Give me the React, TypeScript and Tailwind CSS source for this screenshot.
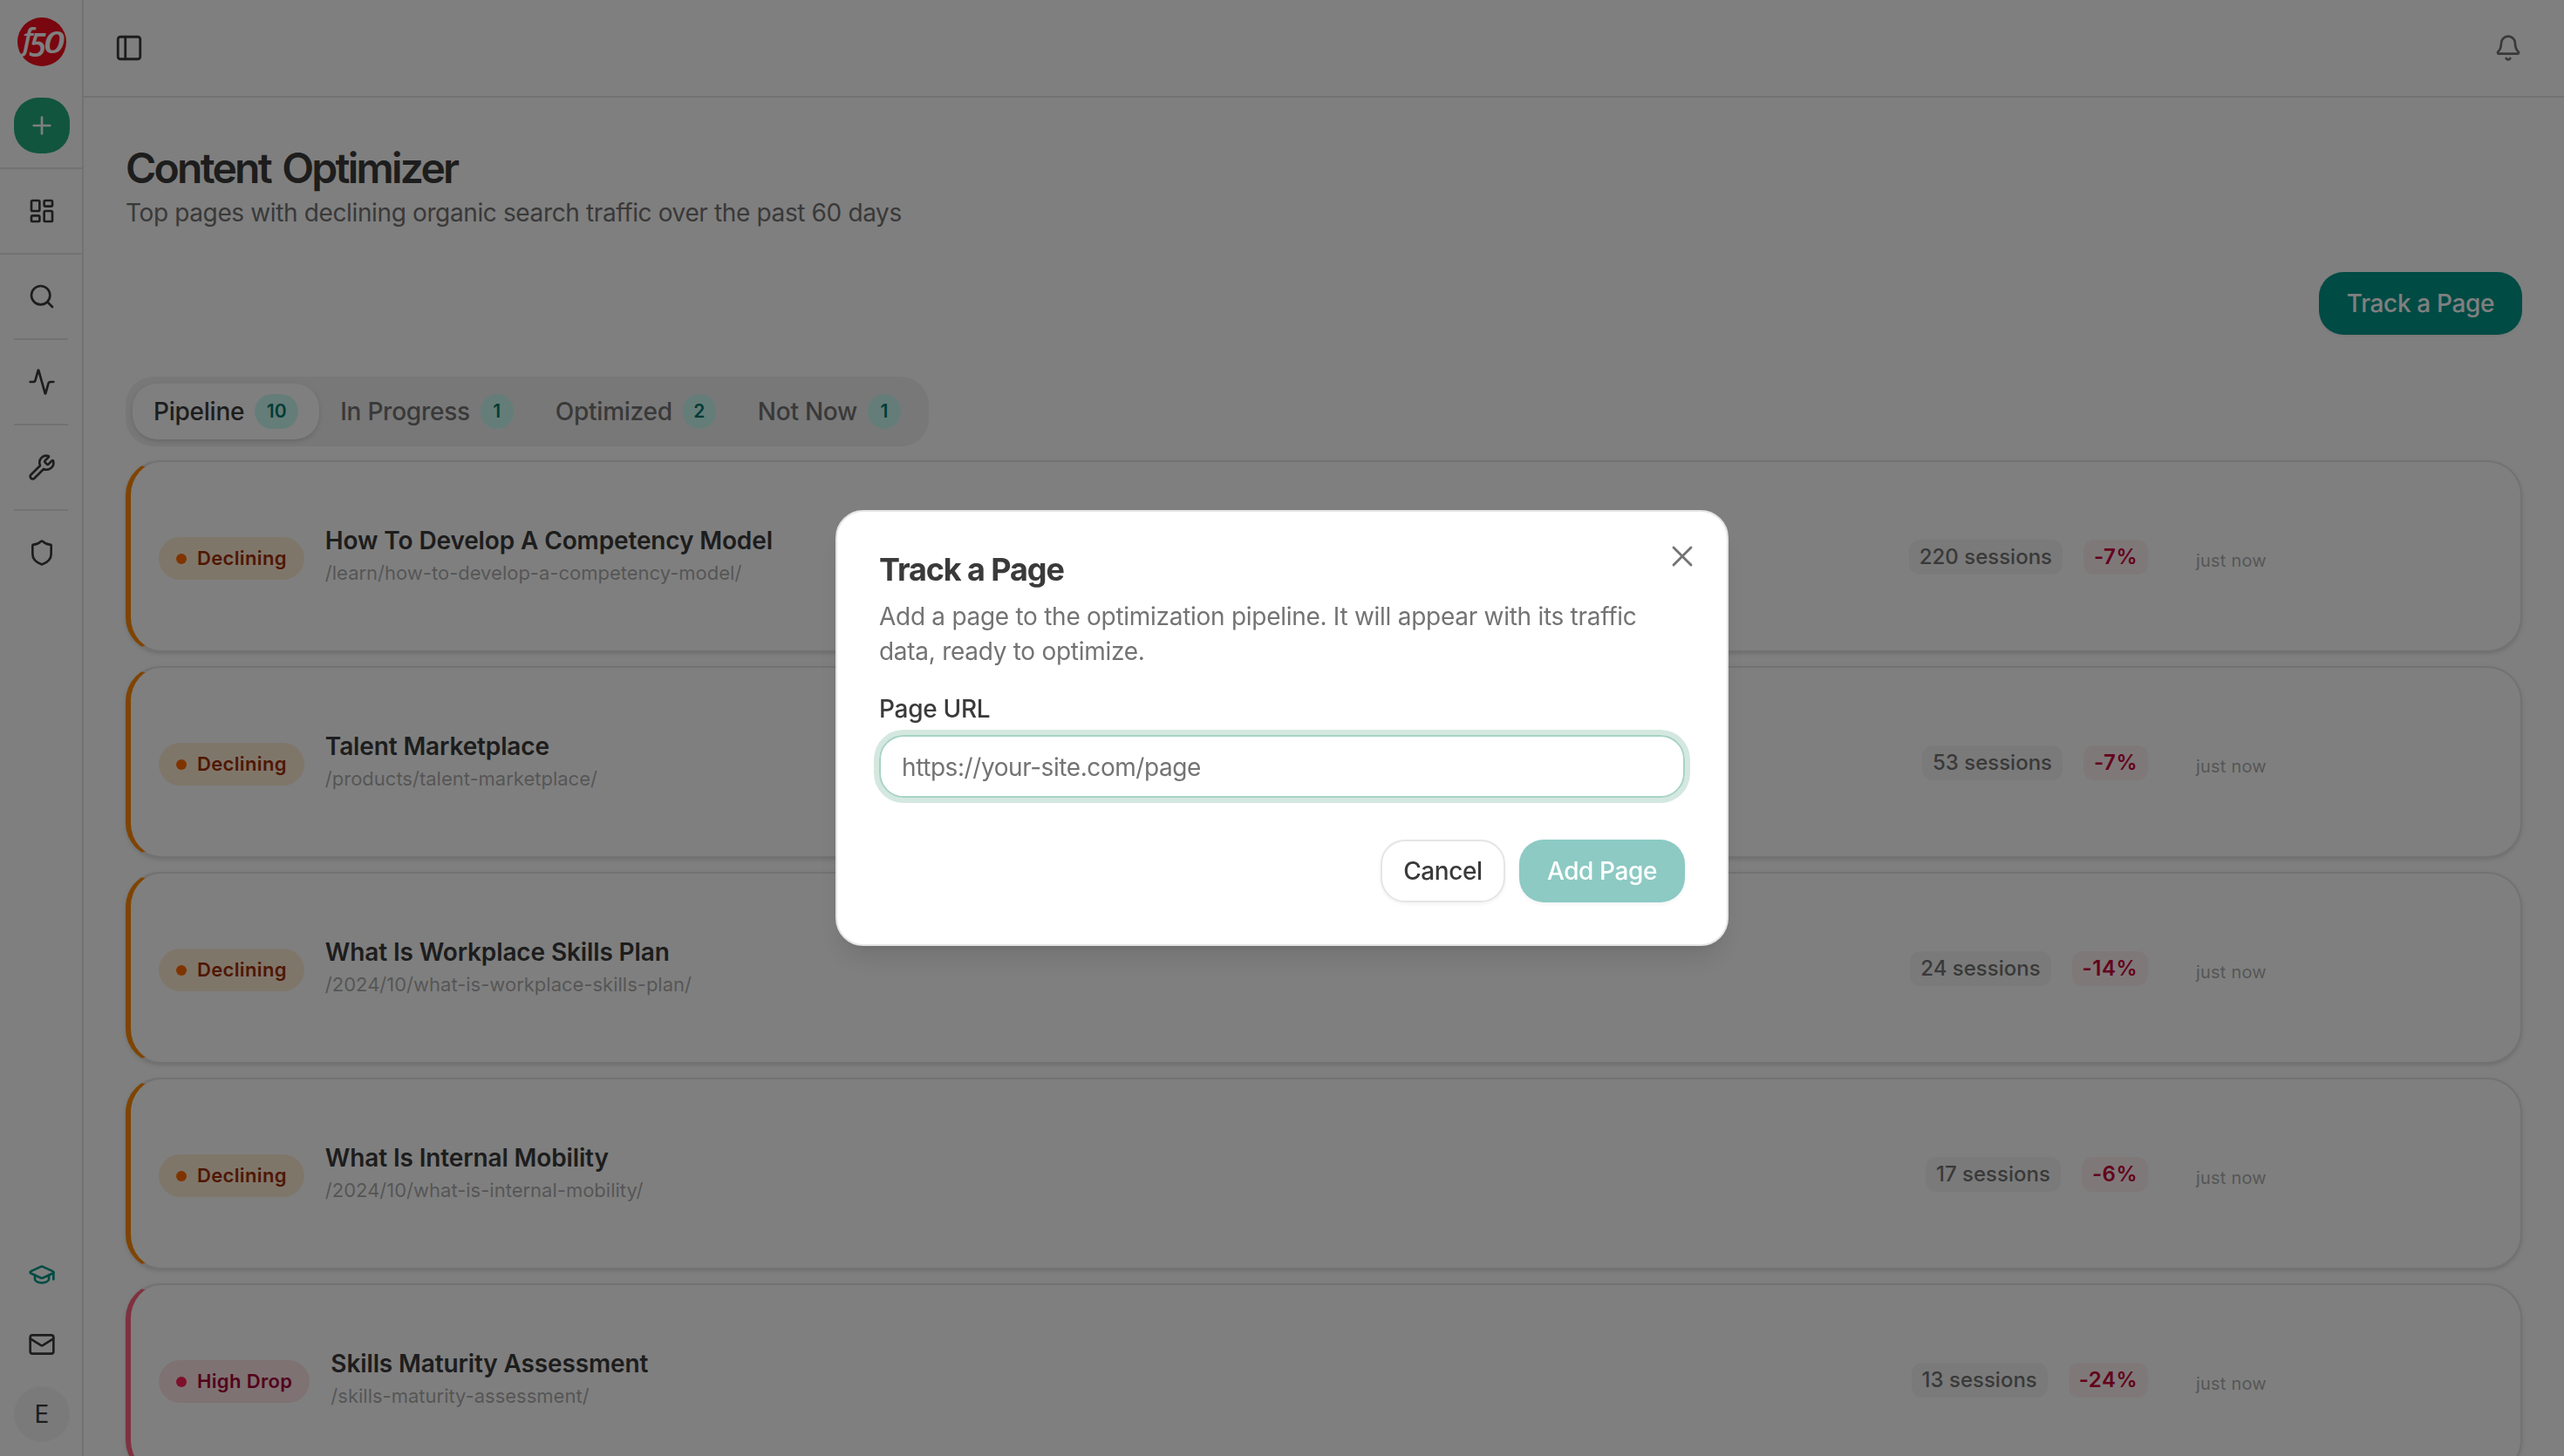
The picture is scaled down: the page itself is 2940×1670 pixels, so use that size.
import {
  Activity,
  Bell,
  GraduationCap,
  LayoutDashboard,
  Mail,
  PanelLeft,
  Plus,
  Search,
  Shield,
  Wrench,
  X,
} from "lucide-react";
import clsx from "clsx";

const tabs = [
  { label: "Pipeline", count: 10 },
  { label: "In Progress", count: 1 },
  { label: "Optimized", count: 2 },
  { label: "Not Now", count: 1 },
];

type Status = "declining" | "high-drop";

interface PageRow {
  title: string;
  path: string;
  sessions: number;
  change: string;
  status: Status;
}

const pages: PageRow[] = [
  {
    title: "How To Develop A Competency Model",
    path: "/learn/how-to-develop-a-competency-model/",
    sessions: 220,
    change: "-7%",
    status: "declining",
  },
  {
    title: "Talent Marketplace",
    path: "/products/talent-marketplace/",
    sessions: 53,
    change: "-7%",
    status: "declining",
  },
  {
    title: "What Is Workplace Skills Plan",
    path: "/2024/10/what-is-workplace-skills-plan/",
    sessions: 24,
    change: "-14%",
    status: "declining",
  },
  {
    title: "What Is Internal Mobility",
    path: "/2024/10/what-is-internal-mobility/",
    sessions: 17,
    change: "-6%",
    status: "declining",
  },
  {
    title: "Skills Maturity Assessment",
    path: "/skills-maturity-assessment/",
    sessions: 13,
    change: "-24%",
    status: "high-drop",
  },
];

const statusStyles = {
  declining: {
    label: "Declining",
    border: "border-l-orange-400",
    badge: "bg-orange-100 text-orange-800",
    dot: "bg-orange-500",
  },
  "high-drop": {
    label: "High Drop",
    border: "border-l-rose-400",
    badge: "bg-rose-100 text-rose-800",
    dot: "bg-rose-500",
  },
};

function Logo() {
  return (
    <svg
      viewBox="0 0 56 56"
      className="size-14 overflow-visible font-['Open_Sans',sans-serif] font-semibold italic"
      fill="#fff"
    >
      <circle cx="28" cy="28" r="28" fill="#f40d1e" />
      <text x="6" y="37" fontSize="34">
        f
      </text>
      <text x="13" y="45" fontSize="38" textLength="20" lengthAdjust="spacingAndGlyphs">
        5
      </text>
      <text x="30" y="41" fontSize="34" textLength="24" lengthAdjust="spacingAndGlyphs">
        0
      </text>
    </svg>
  );
}

function Sidebar() {
  const items = [Search, Activity, Wrench, Shield];

  return (
    <aside className="flex w-24 shrink-0 flex-col border-r-2 border-[#e5e5e5]">
      <div className="flex h-24 items-center pl-5">
        <Logo />
      </div>
      <div className="h-[98px] border-b-2 border-[#e5e5e5] pt-4 pl-4">
        <button className="flex size-16 items-center justify-center rounded-[28px] bg-[#22aa7e] text-white">
          <Plus size={32} />
        </button>
      </div>
      <div className="flex h-[98px] items-center border-b-2 border-[#e5e5e5] pl-8">
        <LayoutDashboard size={32} />
      </div>
      <nav>
        {items.map((Icon, i) => (
          <div key={i}>
            {i > 0 && <div className="mr-4 ml-4 h-0.5 bg-[#e5e5e5]" />}
            <div className="flex h-24 items-center pl-8">
              <Icon size={32} />
            </div>
          </div>
        ))}
      </nav>
      <div className="mt-auto pb-4">
        <div className="flex h-20 items-center pl-8 text-teal-600">
          <GraduationCap size={32} />
        </div>
        <div className="flex h-20 items-center pl-8">
          <Mail size={32} />
        </div>
        <div className="mt-2 ml-4 flex size-16 items-center justify-center rounded-full bg-[#f5f5f5] text-[28px]">
          E
        </div>
      </div>
    </aside>
  );
}

function TabBar() {
  return (
    <div className="flex h-20 w-fit items-center rounded-[32px] bg-[#f0f0f0] p-2">
      {tabs.map((tab, i) => (
        <button
          key={tab.label}
          className={clsx(
            "flex h-16 items-center gap-3 rounded-[28px] px-6 text-[28px] font-medium tracking-[-0.25px]",
            i === 0
              ? "bg-white shadow-[0_2px_6px_rgba(0,0,0,0.1),0_2px_4px_-2px_rgba(0,0,0,0.1)]"
              : "text-[#737373]"
          )}
        >
          {tab.label}
          <span
            className={clsx(
              "flex h-10 items-center justify-center rounded-full bg-teal-100 text-[21px] font-semibold tracking-normal text-teal-700",
              tab.count > 9 ? "w-[50px]" : "w-[38px]"
            )}
          >
            {tab.count}
          </span>
        </button>
      ))}
    </div>
  );
}

function PageCard({ page }: { page: PageRow }) {
  const status = statusStyles[page.status];

  return (
    <div
      className={clsx(
        "flex h-[220px] shrink-0 items-center rounded-[40px] border-2 border-l-[6px] border-[#e5e5e5] bg-white pr-8 pl-8 shadow-[0_2px_6px_rgba(0,0,0,0.1),0_2px_4px_-2px_rgba(0,0,0,0.1)]",
        status.border
      )}
    >
      <span
        className={clsx(
          "mt-[5px] mr-6 flex items-center gap-3 rounded-full px-5 py-2 text-[22px] leading-[33px] font-semibold tracking-[0.35px]",
          status.badge
        )}
      >
        <span className={clsx("size-3 rounded-full", status.dot)} />
        {status.label}
      </span>
      <div className="flex-1 pb-[2px]">
        <h3 className="text-[28px] leading-[41px] font-semibold tracking-[-0.13px]">{page.title}</h3>
        <p className="text-[22px] leading-[33px] text-[#737373]/60">{page.path}</p>
      </div>
      <div className="flex items-center gap-6 pt-px text-[24px] leading-10">
        <span className="rounded-xl bg-[#f5f5f5] px-3 font-medium text-[#737373]">
          {page.sessions} sessions
        </span>
        <span className="rounded-xl bg-rose-50 px-3 font-semibold tracking-[0.5px] text-rose-700">
          {page.change}
        </span>
      </div>
      <span className="mt-[10px] ml-[55px] w-[340px] text-[20px] leading-[33px] tracking-[0.2px] text-[#737373]/60">
        just now
      </span>
    </div>
  );
}

function TrackPageDialog() {
  return (
    <div className="fixed inset-0 flex items-center justify-center bg-black/50">
      <div
        role="dialog"
        className="relative h-[500px] w-[1024px] rounded-[32px] border-2 border-[#e5e5e5] bg-white p-12 shadow-[0_20px_30px_-6px_rgba(0,0,0,0.1),0_8px_12px_-8px_rgba(0,0,0,0.1)]"
      >
        <button className="absolute top-[31px] right-[31px] text-[#737373]">
          <X size={40} strokeWidth={1.7} />
        </button>
        <h2 className="text-[36px] leading-none font-bold tracking-[-1.1px]">Track a Page</h2>
        <p className="mt-4 text-[28px] leading-10 tracking-[-0.28px] text-[#737373]">
          Add a page to the optimization pipeline. It will appear with its traffic data, ready to
          optimize.
        </p>
        <label
          htmlFor="page-url"
          className="mt-8 block text-[28px] leading-none font-[550] tracking-[-0.3px]"
        >
          Page URL
        </label>
        <input
          id="page-url"
          placeholder="https://your-site.com/page"
          className="mt-4 block h-[72px] w-full rounded-[28px] border-2 border-[#a6d3c4] px-6 pt-0.5 text-[28px] tracking-[-0.43px] ring-[6px] ring-[#d4e8e0] outline-none placeholder:text-[#737373]"
        />
        <div className="mt-12 flex justify-end gap-4 text-[28px] font-[550] tracking-[-0.4px]">
          <button className="h-[72px] w-[143px] rounded-[28px] border-2 border-[#e5e5e5] shadow-[0_2px_4px_rgba(0,0,0,0.05)]">
            Cancel
          </button>
          <button className="h-[72px] w-[190px] rounded-[28px] bg-[#8ccac3] text-white shadow-[0_2px_4px_rgba(0,0,0,0.05)]">
            Add Page
          </button>
        </div>
      </div>
    </div>
  );
}

export default function App() {
  return (
    <div className="flex h-[1670px] w-[2940px] overflow-hidden bg-white font-[Inter,sans-serif] text-[#3a3a3a]">
      <Sidebar />
      <div className="flex flex-1 flex-col">
        <header className="flex h-28 shrink-0 items-center justify-between border-b-2 border-[#e5e5e5] pr-12 pl-[35px]">
          <PanelLeft size={34} />
          <Bell size={32} className="text-[#737373]" />
        </header>
        <main className="flex flex-1 flex-col px-12 pt-[49px]">
          <h1 className="text-[48px] leading-[64px] font-semibold tracking-[-2.75px] [word-spacing:4px]">
            Content Optimizer
          </h1>
          <p className="-mt-px text-[28px] leading-10 tracking-[-0.37px] text-[#737373]">
            Top pages with declining organic search traffic over the past 60 days
          </p>
          <button className="mt-12 mb-12 h-[72px] w-[233px] shrink-0 self-end rounded-[28px] bg-teal-600 text-[28px] font-[550] tracking-[-0.35px] text-white shadow-[0_2px_4px_rgba(0,0,0,0.05)]">
            Track a Page
          </button>
          <TabBar />
          <div className="mt-4 flex flex-col gap-4">
            {pages.map((page) => (
              <PageCard key={page.path} page={page} />
            ))}
          </div>
        </main>
      </div>
      <TrackPageDialog />
    </div>
  );
}
